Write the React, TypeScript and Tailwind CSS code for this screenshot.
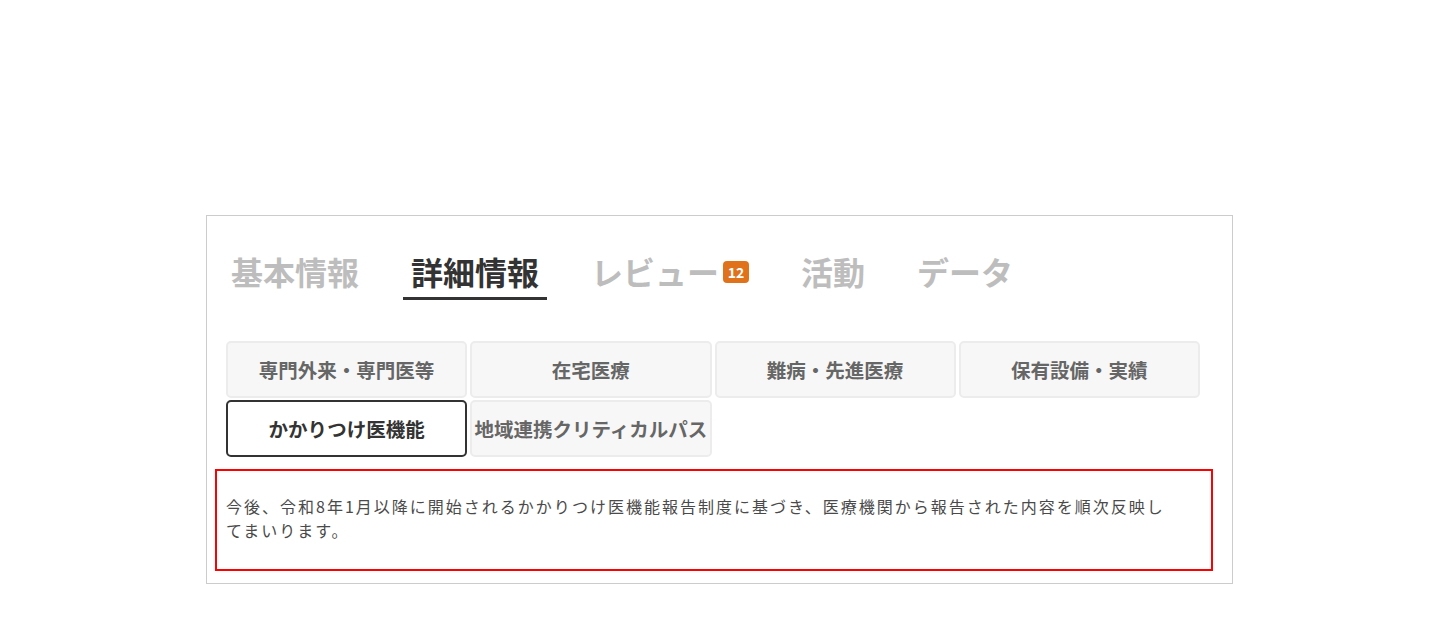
import React, { useState } from 'react';

const mainTabs = ['基本情報', '詳細情報', 'レビュー', '活動', 'データ'];

const subTabs = [
  '専門外来・専門医等',
  '在宅医療',
  '難病・先進医療',
  '保有設備・実績',
  'かかりつけ医機能',
  '地域連携クリティカルパス',
];

export default function App() {
  const [activeMain, setActiveMain] = useState('詳細情報');
  const [activeSub, setActiveSub] = useState('かかりつけ医機能');

  return (
    <div
      className="min-h-[630px] bg-white pt-[215px]"
      style={{ fontFamily: '"Noto Sans CJK JP", "Noto Sans", sans-serif' }}
    >
      <div className="ml-[206px] w-[1027px] border border-[#cccccc] pb-[12px]">
        {/* Main tabs */}
        <div className="flex gap-[36px] pl-[16px] pt-[35px]">
          {mainTabs.map((tab) => {
            const active = tab === activeMain;
            return (
              <button
                key={tab}
                onClick={() => setActiveMain(tab)}
                className={`flex items-center px-2 pb-[6px] border-b-[3px] text-[32px] leading-[40px] font-bold ${
                  active ? 'border-[#333333] text-[#333333]' : 'border-transparent text-[#bdbdbd]'
                }`}
              >
                {tab}
                {tab === 'レビュー' && (
                  <span className="ml-[4px] mt-[2px] flex h-[22px] w-[26px] items-center justify-center rounded-[4px] bg-[#e0721c] text-[14px] font-bold leading-none text-white">
                    12
                  </span>
                )}
              </button>
            );
          })}
        </div>

        {/* Sub tabs */}
        <div className="ml-[19px] mt-[41px] grid w-[974px] grid-cols-4 gap-x-[3px] gap-y-[2px]">
          {subTabs.map((tab) => {
            const active = tab === activeSub;
            return (
              <button
                key={tab}
                onClick={() => setActiveSub(tab)}
                className={`flex h-[57px] items-center justify-center whitespace-nowrap rounded-[5px] border-2 text-[19.5px] font-bold ${
                  active
                    ? 'border-[#333333] bg-white text-[#333333]'
                    : 'border-[#ececec] bg-[#f7f7f7] text-[#666666]'
                }`}
              >
                {tab}
              </button>
            );
          })}
        </div>

        {/* Content */}
        <div className="ml-[8px] mt-[12px] w-[998px] border-2 border-[#ff0000] pb-[27px] pl-[9px] pr-[44px] pt-[23px]">
          <p className="text-[16px] leading-[24px] tracking-[2px] text-[#4a4a4a]">
            今後、令和8年1月以降に開始されるかかりつけ医機能報告制度に基づき、医療機関から報告された内容を順次反映してまいります。
          </p>
        </div>
      </div>
    </div>
  );
}
